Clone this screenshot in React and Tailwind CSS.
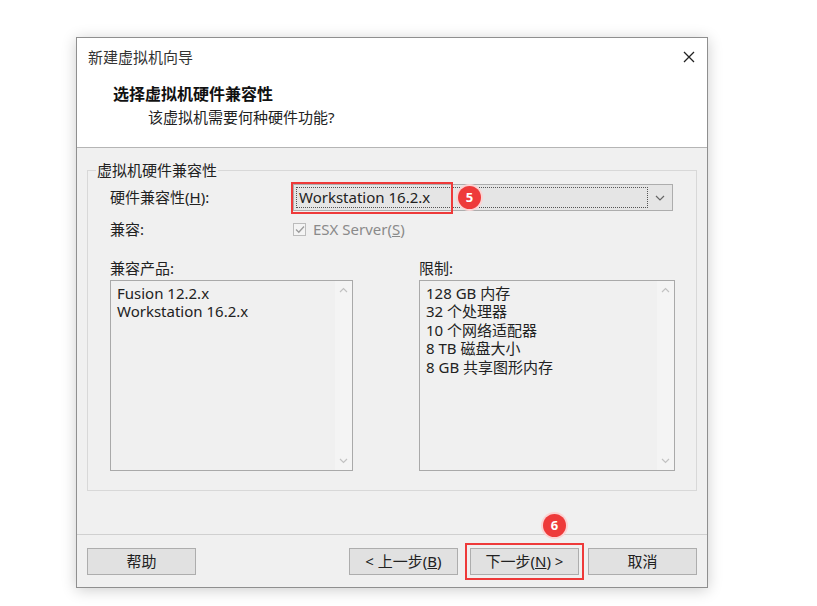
import React from "react";

const FONT = { fontFamily: '"Noto Sans", "Noto Sans CJK SC", sans-serif' };

function Badge({ n }) {
  return (
    <span className="flex h-[23px] w-[23px] items-center justify-center rounded-full bg-[#ee3a3a] text-[13px] font-bold leading-none text-white ring-2 ring-[#fbd3d3]">
      {n}
    </span>
  );
}

function ListBox({ items, className }) {
  return (
    <div className={"flex h-[191px] border border-[#a9a9a9] bg-[#f0f0f0] " + className}>
      <div className="flex-1 px-[6px] pt-[3px] text-[15px] leading-[18.5px] text-[#222]">
        {items.map((t) => (
          <div key={t}>{t}</div>
        ))}
      </div>
      <div className="flex w-[17px] flex-col items-center justify-between bg-[#f4f4f4] py-[6px] text-[#c2c2c2]">
        <svg width="9" height="6" viewBox="0 0 9 6">
          <path d="M1 5 L4.5 1.5 L8 5" fill="none" stroke="currentColor" strokeWidth="1.2" />
        </svg>
        <svg width="9" height="6" viewBox="0 0 9 6">
          <path d="M1 1 L4.5 4.5 L8 1" fill="none" stroke="currentColor" strokeWidth="1.2" />
        </svg>
      </div>
    </div>
  );
}

function Btn({ children, className = "" }) {
  return (
    <div
      className={
        "flex h-[27px] w-[109px] items-center justify-center border border-[#adadad] bg-[#e1e1e1] text-[15px] text-[#222] " +
        className
      }
    >
      {children}
    </div>
  );
}

export default function App() {
  return (
    <div className="h-[606px] w-[817px] bg-white pl-[76px] pt-[37px]" style={FONT}>
      <div className="flex h-[551px] w-[632px] flex-col border border-[#8f8f8f] bg-[#f0f0f0] shadow-[0_2px_14px_rgba(0,0,0,0.2)]">
        {/* header */}
        <div className="h-[110px] border-b border-[#b5b5b5] bg-white">
          <div className="flex h-[38px] items-center justify-between pl-[11px] pr-[12px]">
            <span className="text-[15px] text-[#333]">新建虚拟机向导</span>
            <svg width="12" height="12" viewBox="0 0 12 12">
              <path d="M1 1 L11 11 M11 1 L1 11" stroke="#222" strokeWidth="1.3" />
            </svg>
          </div>
          <div className="pl-[36px] pt-[8px] text-[16px] font-bold leading-[20px] text-[#111]">
            选择虚拟机硬件兼容性
          </div>
          <div className="pl-[71px] pt-[3px] text-[15px] leading-[20px] text-[#222]">
            该虚拟机需要何种硬件功能?
          </div>
        </div>

        {/* body */}
        <div className="flex-1 px-[10px] pt-[22px]">
          <div className="relative h-[321px] border border-[#d8d8d8] pl-[22px] pr-[21px]">
            <span className="absolute left-[8px] top-[-11px] bg-[#f0f0f0] px-[1px] text-[15px] leading-[20px] text-[#222]">
              虚拟机硬件兼容性
            </span>

            <div className="flex items-center pt-[13px] text-[15px] text-[#222]">
              <span className="w-[183px]">
                硬件兼容性(<span className="underline">H</span>):
              </span>
              <div className="relative mr-[2px] flex h-[27px] flex-1 items-center border border-[#adadad] bg-[#e5e5e5]">
                <div className="ml-[2px] flex h-[21px] flex-1 items-center border border-dotted border-[#555] pl-[2px]">
                  Workstation 16.2.x
                </div>
                <div className="flex w-[24px] items-center justify-center text-[#666]">
                  <svg width="10" height="6" viewBox="0 0 10 6">
                    <path d="M1 1 L5 5 L9 1" fill="none" stroke="currentColor" strokeWidth="1.2" />
                  </svg>
                </div>
                <div className="absolute left-[-3px] top-[-3px] h-[32px] w-[162px] border-[2px] border-[#ee3a3a]" />
                <div className="absolute left-[164px] top-[1px]">
                  <Badge n="5" />
                </div>
              </div>
            </div>

            <div className="flex items-center pt-[7px] text-[15px]">
              <span className="w-[183px] text-[#222]">兼容:</span>
              <span className="flex h-[13px] w-[13px] items-center justify-center border border-[#bcbcbc] bg-[#f4f4f4]">
                <svg width="10" height="9" viewBox="0 0 10 9">
                  <path d="M1 4.5 L3.8 7.3 L9 1.5" fill="none" stroke="#9c9c9c" strokeWidth="1.3" />
                </svg>
              </span>
              <span className="ml-[7px] text-[#8a8a8a]">
                ESX Server(<span className="underline">S</span>)
              </span>
            </div>

            <div className="mt-[17px] flex text-[15px] text-[#222]">
              <div className="w-[243px]">
                <div className="h-[20px] leading-[20px]">兼容产品:</div>
                <ListBox items={["Fusion 12.2.x", "Workstation 16.2.x"]} className="mt-[2px]" />
              </div>
              <div className="ml-[66px] flex-1">
                <div className="h-[20px] leading-[20px]">限制:</div>
                <ListBox
                  items={[
                    "128 GB 内存",
                    "32 个处理器",
                    "10 个网络适配器",
                    "8 TB 磁盘大小",
                    "8 GB 共享图形内存",
                  ]}
                  className="mt-[2px]"
                />
              </div>
            </div>
          </div>
        </div>

        {/* footer */}
        <div className="relative flex h-[53px] items-start border-t border-[#d0d0d0] px-[10px] pt-[13px]">
          <Btn>帮助</Btn>
          <div className="flex-1" />
          <Btn>
            &lt; 上一步(<span className="underline">B</span>)
          </Btn>
          <div className="relative ml-[12px]">
            <Btn className="border-[#0078d7]">
              下一步(<span className="underline">N</span>) &gt;
            </Btn>
            <div className="absolute left-[-5px] top-[-5px] h-[37px] w-[119px] border-[2px] border-[#ee3a3a]" />
            <div className="absolute left-[73px] top-[-34px]">
              <Badge n="6" />
            </div>
          </div>
          <Btn className="ml-[9px]">取消</Btn>
        </div>
      </div>
    </div>
  );
}
